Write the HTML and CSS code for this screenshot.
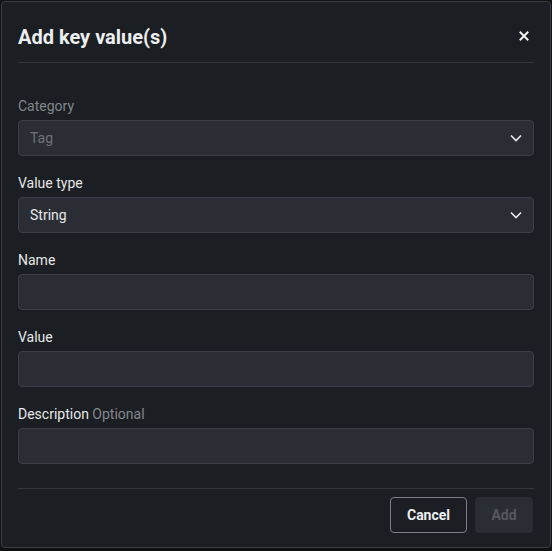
FILE: index.html
```html
<!DOCTYPE html>
<html>
<head>
<meta charset="utf-8">
<link rel="stylesheet" href="styles.css">
</head>
<body>
<div class="dialog">
  <div class="header">
    <h1 class="title">Add key value(s)</h1>
    <button class="close" aria-label="Close">
      <svg width="10" height="10" viewBox="0 0 10 10"><path d="M1.5 1.5 L8.5 8.5 M8.5 1.5 L1.5 8.5" stroke="#f2f3f5" stroke-width="2" stroke-linecap="square"/></svg>
    </button>
  </div>
  <div class="body">
    <div class="field">
      <label class="label muted">Category</label>
      <div class="input select disabled"><span>Tag</span>
        <svg class="chev" width="12" height="8" viewBox="0 0 12 8"><path d="M1 1.5 L6 6.5 L11 1.5" fill="none" stroke="#e8e9eb" stroke-width="1.6"/></svg>
      </div>
    </div>
    <div class="field">
      <label class="label">Value type</label>
      <div class="input select"><span>String</span>
        <svg class="chev" width="12" height="8" viewBox="0 0 12 8"><path d="M1 1.5 L6 6.5 L11 1.5" fill="none" stroke="#e8e9eb" stroke-width="1.6"/></svg>
      </div>
    </div>
    <div class="field">
      <label class="label">Name</label>
      <div class="input"></div>
    </div>
    <div class="field">
      <label class="label">Value</label>
      <div class="input"></div>
    </div>
    <div class="field">
      <label class="label">Description <span class="opt">Optional</span></label>
      <div class="input"></div>
    </div>
  </div>
  <div class="footer">
    <button class="btn cancel">Cancel</button>
    <button class="btn add">Add</button>
  </div>
</div>
</body>
</html>
```

FILE: styles.css
```css
html, body {
  margin: 0;
  padding: 0;
  background: #0f1113;
}
body {
  font-family: Roboto, "Noto Sans", sans-serif;
  color: #e6e7e9;
}
.dialog {
  margin: 1px;
  height: 547px;
  box-sizing: border-box;
  border: 1px solid #3a3d43;
  border-radius: 4px;
  background: #1b1e22;
  padding: 0 16px 0 16px;
  display: flex;
  flex-direction: column;
}
.header {
  display: flex;
  align-items: center;
  justify-content: space-between;
  padding: 21px 0 11px;
  border-bottom: 1px solid #34373c;
}
.title {
  margin: 0;
  font-size: 20px;
  line-height: 28px;
  font-weight: 700;
  color: #eceef0;
}
.close {
  background: none;
  border: none;
  padding: 0;
  margin: 0 5px 2px 0;
  width: 10px;
  height: 10px;
  display: flex;
}
.body {
  padding: 33px 0 24px;
  display: flex;
  flex-direction: column;
  gap: 17px;
  border-bottom: 1px solid #34373c;
}
.field {
  display: flex;
  flex-direction: column;
}
.label {
  font-size: 14px;
  line-height: 20px;
  margin-bottom: 4px;
  color: #e6e7e9;
}
.label.muted, .opt {
  color: #83868c;
}
.input {
  height: 36px;
  box-sizing: border-box;
  border: 1px solid #3c3f47;
  border-radius: 4px;
  background: #2a2d34;
  display: flex;
  align-items: center;
  justify-content: space-between;
  padding: 0 11px 0 11px;
  font-size: 14px;
  color: #e6e7e9;
}
.input.disabled span {
  color: #6f7278;
}
.chev {
  display: block;
}
.footer {
  display: flex;
  justify-content: flex-end;
  gap: 8px;
  padding-top: 8px;
}
.btn {
  height: 36px;
  box-sizing: border-box;
  border-radius: 4px;
  font-family: Roboto, "Noto Sans", sans-serif;
  font-size: 14px;
  font-weight: 700;
  padding: 0 15px;
}
.cancel {
  background: transparent;
  border: 1px solid #7d8087;
  color: #eceef0;
  width: 77px;
}
.add {
  background: #2a2d33;
  border: 1px solid #2a2d33;
  color: #55585e;
  width: 58px;
  margin-right: 1px;
}
```
